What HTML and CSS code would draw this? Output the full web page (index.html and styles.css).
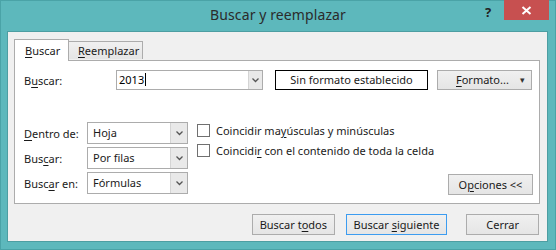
FILE: index.html
```html
<!DOCTYPE html>
<html lang="es">
<head>
<meta charset="utf-8">
<link rel="stylesheet" href="styles.css">
</head>
<body>
<div class="window">
  <div class="titlebar">
    <div class="title">Buscar y reemplazar</div>
    <div class="help">?</div>
    <div class="close">
      <svg width="11" height="9" viewBox="0 0 11 9"><path d="M1.5 1 L9.5 8 M9.5 1 L1.5 8" stroke="#fff" stroke-width="2"/></svg>
    </div>
  </div>
  <div class="client">
    <div class="tabs">
      <div class="tab active"><u>B</u>uscar</div>
      <div class="tab"><u>R</u>eemplazar</div>
    </div>
    <div class="panel">
      <div class="row1">
        <div class="label wide">B<u>u</u>scar:</div>
        <div class="combo">
          <div class="combo-text">2013<span class="caret"></span></div>
          <div class="combo-btn"><svg width="7" height="5" viewBox="0 0 7 5"><path d="M0.5 0.5 L3.5 3.5 L6.5 0.5" stroke="#555" stroke-width="1.3" fill="none"/></svg></div>
        </div>
        <div class="preview">Sin formato establecido</div>
        <div class="btn fmt"><span><u>F</u>ormato...</span><span class="tri">&#9662;</span></div>
      </div>
      <div class="lower">
        <div class="opts">
          <div class="label"><u>D</u>entro de:</div>
          <div class="select"><div class="sel-text">Hoja</div><div class="sel-btn"><svg width="7" height="5" viewBox="0 0 7 5"><path d="M0.5 0.5 L3.5 3.5 L6.5 0.5" stroke="#555" stroke-width="1.3" fill="none"/></svg></div></div>
          <div class="label">Bus<u>c</u>ar:</div>
          <div class="select"><div class="sel-text">Por filas</div><div class="sel-btn"><svg width="7" height="5" viewBox="0 0 7 5"><path d="M0.5 0.5 L3.5 3.5 L6.5 0.5" stroke="#555" stroke-width="1.3" fill="none"/></svg></div></div>
          <div class="label">Busc<u>a</u>r en:</div>
          <div class="select"><div class="sel-text">Fórmulas</div><div class="sel-btn"><svg width="7" height="5" viewBox="0 0 7 5"><path d="M0.5 0.5 L3.5 3.5 L6.5 0.5" stroke="#555" stroke-width="1.3" fill="none"/></svg></div></div>
        </div>
        <div class="checks">
          <div class="check"><span class="box"></span><span>Coincidir ma<u>y</u>úsculas y minúsculas</span></div>
          <div class="check"><span class="box"></span><span>Coincidi<u>r</u> con el contenido de toda la celda</span></div>
        </div>
        <div class="btn opciones">O<u>p</u>ciones &lt;&lt;</div>
      </div>
    </div>
    <div class="actions">
      <div class="btn b1">Buscar t<u>o</u>dos</div>
      <div class="btn b2 focus">Buscar <u>s</u>iguiente</div>
      <div class="btn b3">Cerrar</div>
    </div>
  </div>
</div>
</body>
</html>
```

FILE: styles.css
```css
* { box-sizing: border-box; }
html, body { margin: 0; padding: 0; }
body {
  font-family: "Noto Sans", "Open Sans", sans-serif;
  font-size: 11px;
  color: #1a1a1a;
}
u { text-decoration: underline; text-underline-offset: 2px; }
.window {
  width: 556px;
  height: 250px;
  background: #5db8bc;
  border: 1px solid #4aa3a7;
  display: flex;
  flex-direction: column;
}
.titlebar {
  height: 30px;
  position: relative;
  display: flex;
  justify-content: center;
}
.title {
  font-size: 14px;
  color: #2b2b2b;
  padding-top: 4px;
  letter-spacing: 0.1px;
}
.help {
  position: absolute;
  left: 484px;
  top: 2px;
  font-size: 13px;
  font-weight: bold;
  color: #222;
}
.close {
  position: absolute;
  left: 503px;
  top: -1px;
  width: 45px;
  height: 20px;
  background: #c75050;
  display: flex;
  align-items: center;
  justify-content: center;
}
.client {
  margin: 0 7px 7px 6px;
  flex: 1;
  background: #f0f0f0;
  border: 1px solid #4d9ea2;
  padding: 6px 8px 0 6px;
}
.tabs {
  display: flex;
  align-items: flex-end;
  height: 22px;
  position: relative;
  z-index: 1;
}
.tab {
  border: 1px solid #acacac;
  border-bottom: none;
  height: 18px;
  padding: 0 6px 0 9px;
  line-height: 17px;
  background: linear-gradient(#f0f0f0, #e5e5e5);
  margin-bottom: 1px;
}
.tab.active {
  height: 22px;
  width: 55px;
  background: #fff;
  margin-bottom: -1px;
  line-height: 22px;
  padding-left: 10px;
}
.tab + .tab { margin-left: -1px; width: 75px; padding-left: 9px; }
.panel {
  background: #fff;
  border: 1px solid #acacac;
  width: 526px;
  height: 144px;
  padding: 9px 0 0 9px;
}
.row1 {
  display: flex;
  align-items: center;
  height: 20px;
}
.label.wide { width: 92px; }
.combo {
  width: 147px;
  height: 20px;
  border: 1px solid #acacac;
  display: flex;
}
.combo-text { flex: 1; padding-left: 2px; line-height: 18px; color: #000; }
.caret { display: inline-block; width: 1px; height: 13px; background: #000; vertical-align: -2px; margin-left: 1px; }
.combo-btn, .sel-btn {
  width: 14px;
  background: #e9e9e9;
  border-left: 1px solid #d4d4d4;
  display: flex;
  align-items: center;
  justify-content: center;
}
.preview {
  margin-left: 12px;
  width: 153px;
  height: 20px;
  border: 1px solid #000;
  text-align: center;
  line-height: 18px;
}
.btn {
  border: 1px solid #acacac;
  background: linear-gradient(#f0f0f0, #e5e5e5);
  height: 21px;
  line-height: 19px;
  text-align: center;
}
.fmt {
  margin-left: 9px;
  width: 95px;
  height: 20px;
  line-height: 18px;
  display: flex;
  justify-content: space-between;
  padding: 0 6px 0 18px;
}
.tri { font-size: 9px; color: #333; }
.lower {
  display: flex;
  margin-top: 32px;
}
.opts {
  display: grid;
  grid-template-columns: 63px 101px;
  row-gap: 3px;
  align-items: center;
}
.select {
  height: 22px;
  border: 1px solid #acacac;
  display: flex;
}
.sel-text { flex: 1; padding-left: 5px; line-height: 20px; }
.sel-btn { width: 17px; }
.checks {
  margin-left: 9px;
  padding-top: 2px;
  display: flex;
  flex-direction: column;
  gap: 7px;
}
.check { display: flex; align-items: center; height: 13px; }
.box {
  width: 13px;
  height: 13px;
  border: 1px solid #707070;
  background: #fff;
  margin-right: 6px;
}
.opciones {
  margin-left: auto;
  margin-right: 6px;
  align-self: flex-end;
  width: 85px;
  margin-bottom: -1px;
}
.actions {
  display: flex;
  margin-top: 10px;
  padding-left: 238px;
}
.b1 { width: 83px; }
.b2 { width: 102px; margin-left: 11px; }
.b3 { width: 73px; margin-left: 19px; }
.focus { border-color: #3c9cf0; }
```
